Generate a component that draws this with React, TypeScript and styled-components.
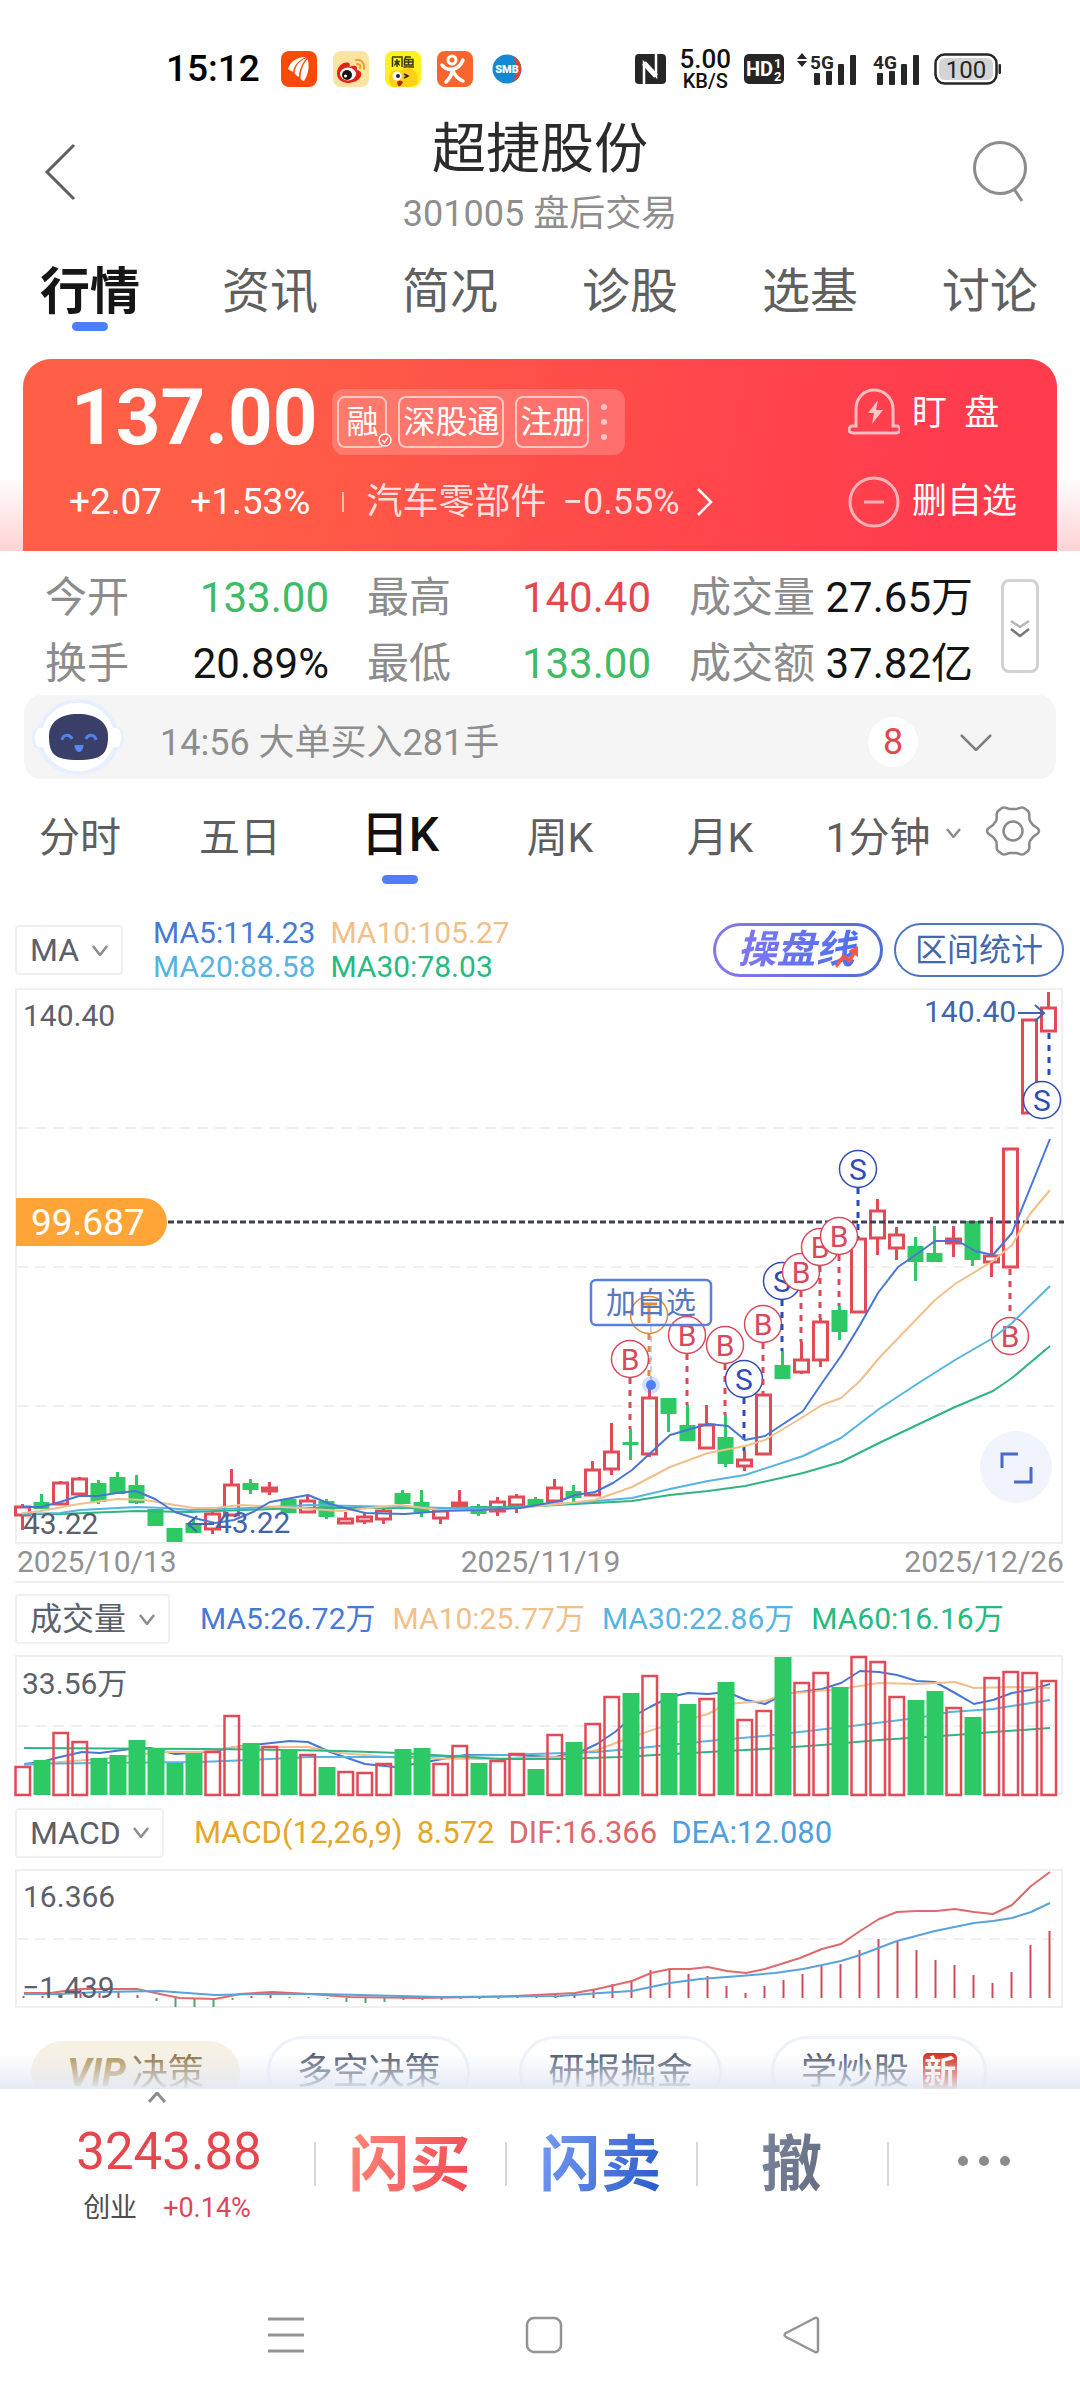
import React from "react";
import styled, { createGlobalStyle, css } from "styled-components";

const FONT = 'Roboto, "Noto Sans CJK SC", sans-serif';
const RED = "#e5474f";
const GREEN = "#3dbb65";
const UP = "#e34a57";
const DOWN = "#2cc964";
const BLUE = "#4d7ff8";
const MA_BLUE = "#4876d6";
const MA_ORANGE = "#f1c08a";
const MA_SKY = "#55b4e2";
const MA_GREEN = "#2fb582";
const INK = "#5b606b";
const FRAME = "#eff0f2";

const GlobalStyle = createGlobalStyle`
  * { box-sizing: border-box; }
  body { margin: 0; background: #fff; font-family: ${FONT}; color: #1a1a1a; }
  button, select { font: inherit; color: inherit; background: none; border: 0; padding: 0; margin: 0; }
  select { appearance: none; outline: none; }
  a { color: inherit; text-decoration: none; }
  h1, p, dl, dt, dd { margin: 0; font-weight: 400; }
`;

const Page = styled.main`
  display: flex;
  flex-direction: column;
  width: 100%;
`;

/* ---------- status bar ---------- */

const StatusBar = styled.div`
  display: flex;
  align-items: center;
  justify-content: space-between;
  height: 108px;
  padding: 30px 78px 0 166px;
`;

const StatusGroup = styled.div<{ $gap: number }>`
  display: flex;
  align-items: center;
  gap: ${(p) => p.$gap}px;
`;

const Clock = styled.span`
  margin-right: 5px;
  font-size: 37px;
  line-height: 40px;
  color: #000;
  font-weight: 500;
`;

const Speed = styled.span`
  display: flex;
  flex-direction: column;
  align-items: center;
  font-size: 20px;
  line-height: 20px;
  font-weight: 500;
  color: #111;
`;

const SpeedValue = styled.span`
  font-size: 26px;
  line-height: 24px;
`;

/* ---------- header ---------- */

const Header = styled.header`
  display: grid;
  grid-template-columns: 64px 1fr 64px;
  align-items: center;
  height: 135px;
  padding: 0 48px 0 28px;
`;

const IconButton = styled.button`
  display: flex;
  align-items: center;
  justify-content: center;
`;

const HeaderButton = styled(IconButton)`
  padding-bottom: 7px;
`;

const TitleBlock = styled.div`
  display: flex;
  flex-direction: column;
  align-items: center;
  padding: 7px 0 0 20px;
`;

const Title = styled.h1`
  font-size: 54px;
  line-height: 70px;
  color: #2b2b2b;
`;

const Subtitle = styled.p`
  font-size: 36px;
  line-height: 58px;
  color: #8e8e8e;
`;

const MainTabs = styled.nav`
  display: grid;
  grid-template-columns: repeat(6, 1fr);
  height: 116px;
  padding-top: 19px;
`;

const MainTab = styled.a<{ $active?: boolean }>`
  display: flex;
  flex-direction: column;
  align-items: center;
  font-size: 48px;
  line-height: 60px;
  color: #606060;
  ${(p) =>
    p.$active &&
    css`
      font-size: 50px;
      font-weight: 700;
      color: #161616;
      &::after {
        content: "";
        width: 36px;
        height: 9px;
        border-radius: 5px;
        background: ${BLUE};
      }
    `}
`;

/* ---------- quote card ---------- */

const CardBand = styled.section`
  padding: 0 23px;
  background: linear-gradient(to top, #ffd3d3 0, #fff 76px);
`;

const Card = styled.div`
  display: grid;
  grid-template-columns: 1fr 175px;
  column-gap: 20px;
  height: 192px;
  padding: 15px 34px 0 46px;
  border-radius: 28px 28px 0 0;
  background: linear-gradient(100deg, #ff5f46 20%, #ff4a4a 58%, #ff3b4e 90%);
  color: #fff;
`;

const CardMain = styled.div`
  display: flex;
  flex-direction: column;
`;

const PriceRow = styled.div`
  display: flex;
  align-items: center;
  gap: 15px;
  height: 88px;
  padding-left: 2px;
`;

const Price = styled.strong`
  font-size: 78px;
  line-height: 88px;
  font-weight: 700;
`;

const TagBox = styled.div`
  display: flex;
  align-items: center;
  gap: 11px;
  height: 66px;
  margin-top: 8px;
  padding: 0 17px 0 5px;
  border-radius: 12px;
  background: rgba(255, 255, 255, 0.2);
`;

const Tag = styled.span`
  position: relative;
  padding: 0 3px;
  border: 2px solid rgba(255, 255, 255, 0.6);
  border-radius: 8px;
  font-size: 32px;
  line-height: 48px;
  &:first-child {
    padding: 0 7px;
  }
`;

const TagCheck = styled.svg`
  position: absolute;
  right: -7px;
  bottom: -1px;
`;

const ChangeRow = styled.div`
  display: flex;
  align-items: center;
  height: 80px;
  font-size: 37px;
  line-height: 48px;
  gap: 28px;
`;

const SectorLink = styled.a`
  display: flex;
  align-items: center;
  gap: 16px;
  padding-left: 24px;
  margin-left: 4px;
  font-size: 36px;
  color: rgba(255, 255, 255, 0.82);
  background: linear-gradient(rgba(255, 255, 255, 0.6), rgba(255, 255, 255, 0.6)) no-repeat 0 50% / 2px 20px;
`;

const CardActions = styled.div`
  display: flex;
  flex-direction: column;
  gap: 8px;
`;

const CardAction = styled.button`
  display: flex;
  align-items: center;
  gap: 12px;
  height: 80px;
  font-size: 35px;
  line-height: 48px;
  white-space: nowrap;
`;

/* ---------- key figures ---------- */

const Figures = styled.section`
  display: flex;
  align-items: flex-start;
  gap: 28px;
  height: 144px;
  padding: 14px 41px 0 45px;
`;

const FigureGrid = styled.dl`
  flex: 1;
  display: grid;
  grid-template-columns: repeat(3, 1fr);
  column-gap: 38px;
`;

const Figure = styled.div`
  display: flex;
  justify-content: space-between;
  font-size: 42px;
  line-height: 66px;
  height: 66px;
`;

const FigureName = styled.dt`
  color: #8c8c8c;
`;

const FigureValue = styled.dd<{ $color?: string }>`
  color: ${(p) => p.$color || "#141414"};
`;

const ExpandFigures = styled.button`
  display: flex;
  align-items: center;
  justify-content: center;
  width: 38px;
  height: 94px;
  margin-top: 14px;
  padding-top: 6px;
  border: 3px solid #d2d2d2;
  border-radius: 8px;
`;

/* ---------- message ---------- */

const MessageBar = styled.button`
  display: flex;
  align-items: center;
  height: 84px;
  margin: 0 24px;
  padding: 0 64px 0 8px;
  border-radius: 18px;
  background: #f5f5f5;
  text-align: left;
  font-size: 36px;
  line-height: 48px;
  color: #8e8e8e;
`;

const MessageText = styled.span`
  flex: 1;
  padding: 12px 0 0 36px;
`;

const Count = styled.span`
  display: flex;
  align-items: center;
  justify-content: center;
  width: 50px;
  height: 50px;
  margin: 10px 42px 0 0;
  border-radius: 50%;
  background: #fff;
  color: ${RED};
`;

const MessageChevron = styled.span`
  display: flex;
  margin-top: 10px;
`;

/* ---------- period tabs ---------- */

const Periods = styled.nav`
  display: grid;
  grid-template-columns: repeat(5, 160fr) 180fr 100fr;
  height: 133px;
  padding-top: 22px;
`;

const Period = styled.a<{ $active?: boolean }>`
  display: flex;
  flex-direction: column;
  align-items: center;
  height: 83px;
  padding-top: 9px;
  font-size: 41px;
  line-height: 56px;
  color: #5e5e5e;
  ${(p) =>
    p.$active &&
    css`
      padding-top: 6px;
      justify-content: space-between;
      font-size: 48px;
      font-weight: 500;
      color: #111;
      &::after {
        content: "";
        width: 36px;
        height: 9px;
        border-radius: 5px;
        background: ${BLUE};
      }
    `}
`;

const MinuteSelect = styled.label`
  display: flex;
  align-items: center;
  justify-content: center;
  gap: 14px;
  height: 56px;
  margin-top: 9px;
  padding-left: 6px;
  font-size: 41px;
  line-height: 56px;
  color: #5e5e5e;
  svg {
    margin-bottom: 10px;
  }
`;

const GearButton = styled(IconButton)`
  height: 60px;
  padding-right: 34px;
`;

/* ---------- indicators ---------- */

const Panel = styled.section`
  padding: 0 16px 0 15px;
`;

const IndicatorBar = styled.div<{ $height: number }>`
  display: flex;
  align-items: center;
  height: ${(p) => p.$height}px;
  gap: 30px;
`;

const SelectBox = styled.label`
  display: flex;
  align-items: center;
  gap: 12px;
  height: 50px;
  padding: 0 13px;
  border: 2px solid ${FRAME};
  border-radius: 4px;
  font-size: 32px;
  line-height: 46px;
  color: ${INK};
`;

const Legend = styled.div<{ $wide?: boolean }>`
  display: flex;
  gap: ${(p) => (p.$wide ? 14 : 17)}px;
  font-size: ${(p) => (p.$wide ? 31 : 30)}px;
  line-height: 34px;
  white-space: nowrap;
`;

const LegendGrid = styled(Legend)`
  display: grid;
  grid-template-columns: auto auto;
  gap: 0 15px;
  margin-right: auto;
`;

const LegendItem = styled.span<{ $color: string }>`
  color: ${(p) => p.$color};
`;

const PillGroup = styled.div`
  display: flex;
  gap: 11px;
`;

const Pill = styled.button<{ $brand?: boolean }>`
  display: flex;
  align-items: center;
  justify-content: center;
  width: 170px;
  height: 54px;
  border: 2px solid #4c74c0;
  border-radius: 27px;
  font-size: 32px;
  line-height: 50px;
  color: #4468ae;
  ${(p) =>
    p.$brand &&
    css`
      border: 3px solid transparent;
      background: linear-gradient(#fff, #fff) padding-box,
        linear-gradient(100deg, #8b78ea, #4a6fd6) border-box;
      font-size: 39px;
      font-weight: 700;
      font-style: italic;
    `}
`;

const BrandText = styled.span`
  padding-right: 4px;
  background: linear-gradient(100deg, #8377f2, #4a6ff0);
  background-clip: text;
  -webkit-background-clip: text;
  color: transparent;
`;

const BrandArrow = styled.svg`
  margin: 14px 0 0 -26px;
`;

const ChartSvg = styled.svg`
  display: block;
  width: 100%;
  height: auto;
  overflow: visible;
  font-family: ${FONT};
  font-size: 30px;
`;

const DateAxis = styled.div`
  display: flex;
  justify-content: space-between;
  height: 39px;
  padding-left: 2px;
  border-bottom: 2px solid ${FRAME};
  font-size: 30px;
  line-height: 36px;
  color: #929292;
`;

/* ---------- chips ---------- */

const Chips = styled.section`
  position: relative;
  display: flex;
  gap: 49px;
  height: 81px;
  padding: 28px 93px 0 31px;
  overflow: hidden;
  &::after {
    content: "";
    position: absolute;
    inset: auto 0 0 0;
    height: 36px;
    background: linear-gradient(rgba(228, 233, 243, 0), rgba(228, 233, 243, 0.95));
  }
`;

const Chip = styled.button<{ $vip?: boolean; $size?: number }>`
  display: flex;
  flex: 1 1 ${(p) => p.$size || 203}px;
  align-items: center;
  justify-content: center;
  gap: 14px;
  height: 72px;
  border: 3px solid #eef2f9;
  border-radius: 36px;
  font-size: 36px;
  line-height: 48px;
  white-space: nowrap;
  color: #4f596e;
  ${(p) =>
    p.$vip &&
    css`
      gap: 6px;
      margin: 5px -22px 0 0;
      height: 64px;
      border: 0;
      background: #f7f1e4;
      color: #8d7443;
    `}
`;

const Vip = styled.em`
  font-size: 38px;
  font-weight: 700;
  color: #b39457;
`;

const NewBadge = styled.span`
  padding: 0 1px;
  border-radius: 5px;
  background: #d5301d;
  color: #fff;
  font-size: 32px;
  line-height: 38px;
  font-weight: 700;
`;

/* ---------- bottom bar ---------- */

const TradeBar = styled.footer`
  display: grid;
  grid-template-columns: 314fr 191fr 191fr 191fr 193fr;
  height: 142px;
`;

const IndexButton = styled.button`
  display: flex;
  flex-direction: column;
  align-items: center;
  height: 142px;
`;

const IndexCaret = styled.span`
  display: flex;
  margin-top: 3px;
`;

const IndexValue = styled.span`
  margin: 23px 0 10px 24px;
  font-size: 51px;
  line-height: 52px;
  color: ${RED};
`;

const IndexDetail = styled.span`
  display: flex;
  gap: 26px;
  margin-left: 20px;
  font-size: 27px;
  line-height: 40px;
  color: #4d4d4d;
`;

const Rise = styled.span`
  color: #d9485a;
`;

const TradeButton = styled.button`
  display: flex;
  align-items: center;
  justify-content: center;
  height: 90px;
  margin-top: 30px;
  font-size: 61px;
  line-height: 90px;
  font-weight: 700;
  background: linear-gradient(#d6d6d6, #d6d6d6) no-repeat 0 50% / 2px 44px;
`;

const TradeText = styled.span<{ $from: string; $to: string }>`
  padding-top: 2px;
  background: linear-gradient(110deg, ${(p) => p.$from}, ${(p) => p.$to});
  background-clip: text;
  -webkit-background-clip: text;
  color: transparent;
`;

const SystemNav = styled.nav`
  display: flex;
  align-items: center;
  justify-content: center;
  gap: 218px;
  height: 170px;
  padding: 38px 0 0 8px;
`;

/* ---------- drawings ---------- */

const Chevron = ({ w = 16, h = 9, up = false, sw = 2.5, color = "#8d8d8d" }) => (
  <svg width={w} height={h + 2} viewBox={`0 0 ${w} ${h + 2}`} fill="none" stroke={color} strokeWidth={sw} aria-hidden>
    <path d={up ? `M1 ${h + 1}L${w / 2} 1L${w - 1} ${h + 1}` : `M1 1L${w / 2} ${h + 1}L${w - 1} 1`} />
  </svg>
);

const AppIcons = () => (
  <>
    <svg width="36" height="36" viewBox="0 0 36 36" aria-hidden>
      <rect width="36" height="36" rx="8" fill="#fb4a08" />
      <path d="M7 18C9 11 15 6 25 6C18 9 13 14 12 21C10 20 9 19 7 18Z" fill="#fff" />
      <path d="M13.500 22C14 15 18 10 25.500 7C21 13 18 19 18 26C16 25 15 24 13.500 22Z" fill="#fff" />
      <path d="M19.500 27C19.500 20 22 13 26.500 8C29 15 27 24 23 30C21.500 30 20 29 19.500 27Z" fill="#fff" />
    </svg>
    <svg width="36" height="36" viewBox="0 0 36 36" aria-hidden>
      <rect width="36" height="36" rx="8" fill="#fbe3a0" />
      <path d="M4 22C4 15 11 10 16 12C17 13 17 14 16.500 16C20 14 25 14 24 19C28 20 29 22 28 25C26 30 20 32 14 32C8 31 4 28 4 22Z" fill="#e2231a" />
      <ellipse cx="15" cy="23" rx="8" ry="6.500" fill="#fff" />
      <circle cx="14" cy="24" r="5" fill="#161616" />
      <circle cx="12.500" cy="25" r="1.500" fill="#fff" />
      <path d="M23 9C28 8 32 12 31 18M24 13C27 13 28 15 27 17" fill="none" stroke="#f2a02c" strokeWidth="2" strokeLinecap="round" />
    </svg>
    <svg width="36" height="36" viewBox="0 0 36 36" aria-hidden>
      <rect width="36" height="36" rx="8" fill="#fdf21d" />
      <path d="M7.500 6V16M7 6H17V16M12 8V16M9.500 10.500H15M11.500 11L9.500 14.500M12.500 11L14.500 14.500M21 5L20 8M21 6H26M19.500 8.500H28V14H19.500ZM23.500 8V14M19.500 11H28M18.500 16H29" fill="none" stroke="#3b3710" strokeWidth="1.500" />
      <path d="M4 30C3 22 8 17 16 20C20 15 26 16 29 20C33 22 33 28 32 33C26 37 10 38 6 34Z" fill="#ffcf1a" />
      <circle cx="12" cy="25" r="4.500" fill="#fff" />
      <circle cx="13" cy="25" r="2" fill="#222" />
      <path d="M19 23L23 25L19 27" fill="none" stroke="#222" strokeWidth="1.500" />
      <path d="M12 31Q15 28 18 31Q16 36 13 35Z" fill="#b32618" />
    </svg>
    <svg width="36" height="36" viewBox="0 0 36 36" aria-hidden>
      <rect width="36" height="36" rx="8" fill="#f9662d" />
      <circle cx="15" cy="9" r="4" fill="none" stroke="#fff" strokeWidth="3" />
      <path d="M5 14C8 18 12 19 16 18C21 17 24 14 26 9" fill="none" stroke="#fff" strokeWidth="3.500" strokeLinecap="round" />
      <path d="M9 31C12 28 15 24 15.500 19C18 25 21 28 26 30" fill="none" stroke="#fff" strokeWidth="3.500" strokeLinecap="round" />
    </svg>
    <svg width="36" height="36" viewBox="0 0 36 36" aria-hidden>
      <circle cx="18" cy="18" r="14.500" fill="#1687d3" />
      <path d="M24 5A14.500 14.500 0 0 1 24 31C28 23 28 13 24 5Z" fill="#e5412d" />
      <text x="18" y="22" fontSize="11" fontWeight="900" fontFamily="Roboto, sans-serif" fill="#fff" textAnchor="middle">SMB</text>
    </svg>
  </>
);

const Nfc = () => (
  <svg width="31" height="32" viewBox="0 0 31 32" aria-hidden>
    <rect x="0" y="1" width="31" height="30" rx="4" fill="#262626" />
    <path d="M9 32V10L21 23V0" fill="none" stroke="#fff" strokeWidth="2.500" />
    <path d="M9 10L21 23" stroke="#fff" strokeWidth="5" />
  </svg>
);

const Hd = () => (
  <svg width="40" height="30" viewBox="0 0 40 30" fontFamily="Roboto, sans-serif" fontWeight="700" fill="#fff" aria-hidden>
    <rect width="40" height="30" rx="5" fill="#262626" />
    <text x="2" y="22" fontSize="20">HD</text>
    <text x="30" y="14" fontSize="13">1</text>
    <text x="30" y="27" fontSize="13">2</text>
  </svg>
);

const Signal = ({ name, arrows = false }: { name: string; arrows?: boolean }) => (
  <svg width={arrows ? 61 : 50} height="34" viewBox={arrows ? "0 0 61 34" : "11 0 50 34"} fill="#262626" overflow="visible" aria-hidden>
    {arrows && <path d="M0 7L5 1L10 7ZM0 9H10L5 15Z" />}
    <text x="13" y="17" fontSize="19" fontWeight="700" fontFamily="Roboto, sans-serif">{name}</text>
    <rect x="17" y="21" width="6" height="12" rx="1" />
    <rect x="29" y="19" width="6" height="14" rx="1" />
    <rect x="41" y="12" width="6" height="21" rx="1" />
    <rect x="53" y="3" width="6" height="30" rx="1" />
  </svg>
);

const Battery = () => (
  <svg width="68" height="32" viewBox="0 0 68 32" aria-hidden>
    <rect x="1.500" y="1.500" width="61" height="29" rx="9" fill="#fff" stroke="#262626" strokeWidth="2.500" />
    <rect x="5" y="5" width="54" height="22" rx="6" fill="#d4d4d4" />
    <rect x="64.500" y="11" width="2.500" height="10" rx="1" fill="#262626" />
    <text x="32" y="24.500" fontSize="24" fontFamily="Roboto, sans-serif" fill="#262626" textAnchor="middle">100</text>
  </svg>
);

const Robot = () => (
  <svg width="92" height="78" viewBox="0 0 92 78" aria-hidden>
    <path d="M46 1C68 1 82 16 85 29C91 30 92 34 92 40S91 50 86 51C80 67 65 77 46 77S12 67 6 51C1 50 0 46 0 40S1 30 7 29C10 16 24 1 46 1Z" fill="#e9f0fd" />
    <path d="M46 5C65 5 77 17 81 30H84Q89 30 89 40T84 49H81C76 63 63 73 46 73S16 63 11 49H8Q3 49 3 40T8 30H11C15 17 27 5 46 5Z" fill="#fff" />
    <path d="M46 16C64 16 76 24 76 38C76 56 70 62 46 62S17 56 17 38C17 24 28 16 46 16Z" fill="#3a3f69" />
    <path d="M30 42C31 36 38 36 40 41M54 41C56 36 63 36 64 42" fill="none" stroke="#4c83ee" strokeWidth="3" />
    <path d="M42.500 47H51.500Q51 54 47 54T42.500 47Z" fill="#5589f5" />
  </svg>
);

/* ---------- chart data ---------- */

type Candle = [up: 0 | 1, high: number, top: number, bottom: number, low: number, volumeTop: number];

const CANDLES: Candle[] = [
  [1, 1504, 1507, 1515, 1530, 1766], [0, 1494, 1502, 1509, 1509, 1760], [1, 1481, 1483, 1504, 1504, 1732],
  [1, 1477, 1479, 1494, 1496, 1741], [0, 1480, 1483, 1502, 1504, 1758], [0, 1472, 1477, 1494, 1494, 1755],
  [0, 1475, 1485, 1503, 1504, 1740], [0, 1509, 1509, 1526, 1526, 1748], [0, 1528, 1528, 1542, 1542, 1763],
  [0, 1519, 1523, 1533, 1533, 1753], [1, 1512, 1514, 1529, 1534, 1751], [1, 1469, 1485, 1515, 1515, 1715],
  [0, 1479, 1483, 1490, 1494, 1743], [1, 1482, 1488, 1491, 1495, 1746], [0, 1499, 1499, 1513, 1513, 1749],
  [1, 1495, 1501, 1512, 1513, 1754], [0, 1499, 1501, 1517, 1519, 1767], [1, 1512, 1519, 1523, 1524, 1771],
  [1, 1512, 1517, 1521, 1524, 1772], [1, 1509, 1511, 1519, 1524, 1763], [0, 1490, 1493, 1504, 1504, 1749],
  [0, 1490, 1502, 1512, 1517, 1748], [1, 1509, 1511, 1518, 1524, 1763], [1, 1490, 1503, 1506, 1506, 1745],
  [0, 1504, 1506, 1514, 1516, 1763], [1, 1497, 1502, 1511, 1516, 1760], [1, 1494, 1497, 1505, 1513, 1753],
  [0, 1497, 1499, 1505, 1505, 1769], [1, 1479, 1488, 1501, 1501, 1734], [0, 1485, 1491, 1498, 1502, 1742],
  [1, 1461, 1470, 1495, 1495, 1723], [1, 1423, 1452, 1469, 1475, 1696], [0, 1429, 1442, 1445, 1460, 1693],
  [1, 1388, 1398, 1454, 1457, 1675], [0, 1398, 1398, 1414, 1432, 1693], [0, 1405, 1425, 1441, 1441, 1704],
  [1, 1405, 1425, 1448, 1448, 1698], [0, 1415, 1437, 1464, 1467, 1682], [1, 1451, 1460, 1466, 1471, 1719],
  [1, 1394, 1395, 1454, 1454, 1710], [0, 1351, 1365, 1379, 1379, 1657], [1, 1342, 1360, 1372, 1374, 1682],
  [1, 1318, 1322, 1360, 1367, 1672], [0, 1306, 1310, 1332, 1340, 1687], [1, 1238, 1239, 1312, 1312, 1656],
  [1, 1199, 1211, 1238, 1255, 1661], [1, 1227, 1235, 1248, 1260, 1696], [0, 1237, 1246, 1262, 1281, 1700],
  [0, 1226, 1253, 1262, 1262, 1691], [1, 1226, 1239, 1243, 1257, 1707], [0, 1221, 1221, 1260, 1266, 1717],
  [1, 1217, 1256, 1262, 1277, 1677], [1, 1148, 1149, 1267, 1267, 1671], [1, 1019, 1020, 1113, 1113, 1672],
  [1, 992, 1008, 1031, 1031, 1680],
];

const PRICE_LINES = [
  [MA_GREEN, "22,1514 60,1514 137,1511 190,1512 300,1508 450,1508 540,1506 575,1504 632,1501 670,1495 708,1491 745,1486 803,1473 841,1462 879,1443 917,1425 955,1407 993,1391 1012,1378 1050,1346"],
  [MA_SKY, "22,1514 60,1513 80,1510 137,1507 165,1508 190,1510 250,1508 310,1505 400,1507 500,1509 560,1504 632,1498 670,1489 708,1481 745,1475 803,1456 841,1438 879,1409 917,1384 955,1360 993,1338 1012,1323 1050,1286"],
  [MA_ORANGE, "22,1513 41,1511 79,1504 117,1499 145,1500 175,1505 194,1508 215,1508 240,1505 300,1508 340,1511 400,1505 440,1510 480,1510 520,1508 560,1504 595,1500 632,1487 670,1467 708,1453 745,1446 765,1440 803,1417 822,1405 841,1398 860,1381 879,1358 935,1300 955,1284 993,1261 1012,1245 1030,1214 1050,1190"],
  [MA_BLUE, "22,1507 41,1507 60,1502 79,1496 98,1496 117,1493 136,1491 155,1499 175,1512 194,1518 215,1523 234,1520 253,1512 270,1502 308,1495 330,1504 365,1513 405,1514 442,1511 480,1510 520,1508 560,1501 575,1495 595,1492 613,1483 632,1470 670,1435 708,1424 728,1426 745,1440 765,1436 803,1411 822,1383 841,1356 860,1325 878,1293 898,1267 917,1254 935,1241 958,1241 975,1251 993,1255 1012,1233 1050,1139"],
];

const VOLUME_LINES = [
  [MA_BLUE, "24,1764 41,1762 60,1757 82,1752 100,1753 130,1749 150,1748 175,1754 194,1753 215,1751 235,1747 262,1744 290,1741 308,1742 330,1752 365,1764 395,1767 420,1763 465,1755 510,1755 555,1757 580,1752 597,1744 615,1732 632,1717 650,1707 670,1697 688,1693 708,1694 727,1692 746,1700 765,1704 784,1694 800,1692 822,1689 841,1683 860,1671 879,1672 897,1675 917,1681 935,1682 955,1693 974,1704 993,1700 1012,1693 1030,1690 1050,1684"],
  [MA_ORANGE, "24,1766 60,1762 100,1759 137,1755 160,1752 200,1752 235,1747 308,1747 340,1753 400,1758 480,1759 560,1757 597,1750 632,1737 670,1724 708,1714 727,1704 765,1701 784,1694 841,1689 879,1683 917,1684 955,1682 974,1688 1012,1687 1050,1688"],
  [MA_SKY, "24,1764 100,1763 200,1762 250,1760 310,1757 400,1757 500,1755 597,1752 650,1747 708,1741 765,1736 860,1725 917,1718 950,1712 993,1709 1050,1700"],
  [MA_GREEN, "24,1748 200,1749 290,1750 340,1751 400,1753 500,1759 560,1759 620,1757 708,1752 765,1749 822,1745 879,1740 955,1735 993,1732 1050,1728"],
];

const MACD_BARS = [
  1996, 1996, 1993, 1990, 1991, 1992, 1995, 2001, 2007, 2007, 2007, 2000, 1996, 1993, 1997, 1997, 1999, 2002, 2003,
  2002, 2000, 2000, 2000, 1999, 1999, 1999, 1996, 1996, 1993, 1993, 1990, 1984, 1980, 1970, 1968, 1974, 1976, 1986,
  1993, 1986, 1980, 1974, 1966, 1964, 1950, 1939, 1941, 1950, 1960, 1965, 1975, 1983, 1972, 1945, 1931,
];

const MACD_LINES = [
  ["#df6a6c", "24,1993 50,1993 80,1989 137,1989 160,1994 180,1998 215,1999 240,1994 272,1992 310,1994 350,1997 420,1998 480,1997 515,1996 575,1993 597,1989 632,1981 651,1973 670,1969 690,1969 708,1967 727,1971 746,1973 765,1969 800,1958 822,1949 841,1944 860,1931 879,1919 897,1912 917,1911 936,1911 955,1909 974,1912 993,1914 1012,1905 1031,1886 1050,1872"],
  ["#5aa2dc", "24,1994 60,1994 100,1992 160,1991 215,1995 260,1994 320,1994 440,1997 560,1996 600,1993 632,1991 670,1983 700,1979 740,1976 775,1973 803,1969 841,1961 860,1955 897,1941 935,1931 974,1923 993,1921 1012,1918 1031,1912 1050,1903"],
];

const MARKS: { kind: "B" | "S" | "T"; x: number; y: number; stem: [number, number, number] }[] = [
  { kind: "T", x: 649, y: 1315, stem: [649, 1334, 1380] },
  { kind: "B", x: 630, y: 1359, stem: [630, 1378, 1429] },
  { kind: "B", x: 687, y: 1335, stem: [687, 1354, 1405] },
  { kind: "B", x: 725, y: 1345, stem: [725, 1364, 1415] },
  { kind: "S", x: 744, y: 1379, stem: [744, 1398, 1451] },
  { kind: "B", x: 763, y: 1324, stem: [763, 1343, 1394] },
  { kind: "S", x: 782, y: 1281, stem: [782, 1300, 1351] },
  { kind: "B", x: 801, y: 1272, stem: [801, 1291, 1342] },
  { kind: "B", x: 820, y: 1247, stem: [820, 1266, 1318] },
  { kind: "S", x: 858, y: 1169, stem: [858, 1188, 1238] },
  { kind: "B", x: 839, y: 1236, stem: [839, 1255, 1306] },
  { kind: "B", x: 1010, y: 1336, stem: [1010, 1269, 1317] },
  { kind: "S", x: 1042, y: 1100, stem: [1049, 1033, 1081] },
];

const MARK_COLOR = { B: "#d84a5a", S: "#2f4bb8", T: "#e08a3a" };

const xAt = (i: number) => 22.5 + i * 19;

const Lines = ({ data, width = 2 }: { data: string[][]; width?: number }) => (
  <>
    {data.map(([color, points]) => (
      <polyline key={color} points={points} fill="none" stroke={color} strokeWidth={width} strokeLinejoin="round" />
    ))}
  </>
);

const Frame = ({ top, bottom, grid }: { top: number; bottom: number; grid: number[] }) => (
  <g stroke={FRAME} strokeWidth="2" fill="none">
    <rect x="16" y={top} width="1046" height={bottom - top} />
    {grid.map((y) => (
      <path key={y} d={`M17 ${y}H1062`} strokeDasharray="11 7" />
    ))}
  </g>
);

const PriceChart = () => (
  <ChartSvg viewBox="15 988 1049 556" role="img" aria-label="日K">
    <Frame top={989} bottom={1543} grid={[1128, 1267, 1406]} />
    {CANDLES.map(([up, high, top, bottom, low], i) => {
      const x = xAt(i);
      const color = up ? UP : DOWN;
      return (
        <g key={i} stroke={color} strokeWidth="3" fill={up ? "none" : color}>
          <path d={`M${x} ${high}V${top}M${x} ${bottom}V${low}`} />
          {up ? (
            <rect x={x - 7} y={top} width="14" height={bottom - top} />
          ) : (
            <rect x={x - 8} y={top} width="16" height={bottom - top} stroke="none" />
          )}
        </g>
      );
    })}
    <path d="M150 1222H1064" stroke="#3c4154" strokeWidth="3" strokeDasharray="6 3" />
    {MARKS.map(({ kind, x, y, stem: [sx, from, to] }) => (
      <g key={`${kind}${x}`} stroke={MARK_COLOR[kind]}>
        <path d={`M${sx} ${from}V${to}`} strokeWidth="3" strokeDasharray="6 6" />
        <circle cx={x} cy={y} r="18.500" fill="#fff" strokeWidth="1.500" />
        {kind === "T" ? (
          <path d={`M${x - 8} ${y - 11}H${x + 8}M${x} ${y - 11}V${y + 8}`} strokeWidth="3" />
        ) : (
          <text x={x} y={y + 11} textAnchor="middle" fill={MARK_COLOR[kind]} stroke="none">{kind}</text>
        )}
      </g>
    ))}
    <Lines data={PRICE_LINES} />
    <rect x="591" y="1280" width="120" height="45" rx="5" fill="none" stroke="#5a80dc" strokeWidth="2.500" />
    <text x="651" y="1313" textAnchor="middle" fill="#5577c4">加自选</text>
    <path d="M651 1326V1380" stroke="#9b9fd0" strokeDasharray="6 4" />
    <circle cx="651" cy="1385" r="9" fill={BLUE} fillOpacity="0.25" />
    <circle cx="651" cy="1385" r="5" fill={BLUE} />
    <g fill={INK}>
      <text x="23" y="1026">140.40</text>
      <text x="23" y="1534">43.22</text>
    </g>
    <g fill="#3f66ac">
      <text x="924" y="1022">140.40</text>
      <text x="215" y="1533">43.22</text>
      <path d="M1018 1013H1044M1035 1005L1044 1013L1035 1021M214 1524H188M197 1516L188 1524L197 1532" fill="none" stroke="#3f66ac" strokeWidth="2" />
    </g>
    <path d="M16 1198H143A24 24 0 0 1 143 1246H16Z" fill="#ffa538" />
    <text x="31" y="1235" fontSize="37" fill="#fff">99.687</text>
    <circle cx="1016" cy="1467" r="36" fill="#f1f4fd" />
    <path d="M1002 1468V1454H1018M1014 1482H1031V1467" fill="none" stroke="#4a69c8" strokeWidth="3" />
  </ChartSvg>
);

const VolumeChart = () => (
  <ChartSvg viewBox="15 1655 1049 141" role="img" aria-label="成交量">
    <Frame top={1656} bottom={1794} grid={[1726]} />
    <Lines data={VOLUME_LINES} />
    {CANDLES.map(([up, , , , , top], i) =>
      up ? (
        <rect key={i} x={xAt(i) - 7} y={top + 1} width="14.500" height={1794 - top} fill="none" stroke={UP} strokeWidth="2.500" />
      ) : (
        <rect key={i} x={xAt(i) - 8} y={top} width="17" height={1795 - top} fill={DOWN} />
      )
    )}
    <text x="22" y="1694" fill={INK}>33.56万</text>
  </ChartSvg>
);

const MacdChart = () => (
  <ChartSvg viewBox="15 1869 1049 139" role="img" aria-label="MACD">
    <Frame top={1870} bottom={2007} grid={[1939]} />
    {MACD_BARS.map((y, i) => (
      <path key={i} d={`M${xAt(i) + 1} 1998V${y}`} stroke={y < 1998 ? "#cf4a58" : "#49a968"} strokeWidth="2" />
    ))}
    <Lines data={MACD_LINES} />
    <g fill={INK}>
      <text x="23" y="1907">16.366</text>
      <text x="22" y="1998">−1.439</text>
    </g>
  </ChartSvg>
);

const IndicatorSelect = ({ name }: { name: string }) => (
  <SelectBox>
    <select aria-label={name}>
      <option>{name}</option>
    </select>
    <Chevron />
  </SelectBox>
);

const FIGURES: [string, string, string?][] = [
  ["今开", "133.00", GREEN],
  ["最高", "140.40", RED],
  ["成交量", "27.65万"],
  ["换手", "20.89%"],
  ["最低", "133.00", GREEN],
  ["成交额", "37.82亿"],
];

const TRADES = [
  ["闪买", "#ff8a78", "#f24450"],
  ["闪卖", "#7a9df8", "#2358c8"],
  ["撤", "#7b859c", "#636c80"],
];

export default function App() {
  return (
    <Page>
      <GlobalStyle />
      <StatusBar>
        <StatusGroup $gap={16}>
          <Clock>15:12</Clock>
          <AppIcons />
        </StatusGroup>
        <StatusGroup $gap={13}>
          <Nfc />
          <Speed>
            <SpeedValue>5.00</SpeedValue>
            KB/S
          </Speed>
          <Hd />
          <Signal name="5G" arrows />
          <Signal name="4G" />
          <Battery />
        </StatusGroup>
      </StatusBar>

      <Header>
        <HeaderButton aria-label="返回">
          <svg width="44" height="60" viewBox="0 0 44 60" fill="none" stroke="#5f5f5f" strokeWidth="3" aria-hidden>
            <path d="M36 3L9 30L36 57" />
          </svg>
        </HeaderButton>
        <TitleBlock>
          <Title>超捷股份</Title>
          <Subtitle>301005 盘后交易</Subtitle>
        </TitleBlock>
        <HeaderButton aria-label="搜索">
          <svg width="56" height="64" viewBox="0 0 56 64" fill="none" stroke="#8c8c8c" strokeWidth="3" aria-hidden>
            <circle cx="28" cy="28" r="25.500" />
            <path d="M42 49L50 61" />
          </svg>
        </HeaderButton>
      </Header>

      <MainTabs>
        {["行情", "资讯", "简况", "诊股", "选基", "讨论"].map((t, i) => (
          <MainTab key={t} href="#" $active={i === 0}>{t}</MainTab>
        ))}
      </MainTabs>

      <CardBand>
        <Card>
          <CardMain>
            <PriceRow>
              <Price>137.00</Price>
              <TagBox>
                <Tag>
                  融
                  <TagCheck width="14" height="14" viewBox="0 0 14 14" aria-hidden>
                    <circle cx="7" cy="7" r="6" fill="#ff6a5c" stroke="#fff" strokeWidth="1.500" />
                    <path d="M4 7L6.500 9.500L10 4.500" fill="none" stroke="#fff" strokeWidth="1.500" />
                  </TagCheck>
                </Tag>
                <Tag>深股通</Tag>
                <Tag>注册</Tag>
                <svg width="8" height="38" viewBox="0 0 8 38" fill="#fff" fillOpacity="0.6" aria-hidden>
                  <circle cx="4" cy="4" r="3" />
                  <circle cx="4" cy="19" r="3" />
                  <circle cx="4" cy="34" r="3" />
                </svg>
              </TagBox>
            </PriceRow>
            <ChangeRow>
              <span>+2.07</span>
              <span>+1.53%</span>
              <SectorLink href="#">
                <span>汽车零部件</span>
                <span>−0.55%</span>
                <svg width="17" height="30" viewBox="0 0 17 30" fill="none" stroke="#fff" strokeWidth="2.500" aria-hidden>
                  <path d="M2 2L15 15L2 28" />
                </svg>
              </SectorLink>
            </ChangeRow>
          </CardMain>
          <CardActions>
            <CardAction>
              <svg width="52" height="52" viewBox="0 0 52 52" fill="none" stroke="#fff" strokeOpacity="0.65" strokeWidth="3" aria-hidden>
                <path d="M8 38V21C8 10 16 2 26 2S45 10 45 21V38H48.500A3 3 0 0 1 48.500 45H4.500A3 3 0 0 1 4.500 38Z" />
                <path d="M30 12L20 25H26L24 36L35 22H28Z" fill="#fff" fillOpacity="0.7" stroke="none" />
              </svg>
              盯&nbsp;&nbsp;盘
            </CardAction>
            <CardAction>
              <svg width="52" height="52" viewBox="0 0 52 52" fill="none" stroke="#fff" strokeOpacity="0.6" strokeWidth="3" aria-hidden>
                <circle cx="26" cy="26" r="24" />
                <path d="M16 26H36" />
              </svg>
              删自选
            </CardAction>
          </CardActions>
        </Card>
      </CardBand>

      <Figures>
        <FigureGrid>
          {FIGURES.map(([name, value, color]) => (
            <Figure key={name}>
              <FigureName>{name}</FigureName>
              <FigureValue $color={color}>{value}</FigureValue>
            </Figure>
          ))}
        </FigureGrid>
        <ExpandFigures aria-label="展开">
          <svg width="20" height="20" viewBox="0 0 20 20" fill="none" strokeWidth="2.500" aria-hidden>
            <path d="M1 2L10 8L19 2" stroke="#b5b5b5" />
            <path d="M1 10L10 17L19 10" stroke="#777" />
          </svg>
        </ExpandFigures>
      </Figures>

      <MessageBar>
        <Robot />
        <MessageText>14:56 大单买入281手</MessageText>
        <Count>8</Count>
        <MessageChevron>
          <Chevron w={32} h={15} color="#7d7d7d" />
        </MessageChevron>
      </MessageBar>

      <Periods>
        {["分时", "五日", "日K", "周K", "月K"].map((t) => (
          <Period key={t} href="#" $active={t === "日K"}>{t}</Period>
        ))}
        <MinuteSelect>
          <select aria-label="分钟周期">
            <option>1分钟</option>
          </select>
          <Chevron w={15} h={8} />
        </MinuteSelect>
        <GearButton aria-label="设置">
          <svg width="56" height="56" viewBox="0 0 56 56" fill="none" stroke="#8a8a8a" strokeWidth="2.500" aria-hidden>
            <path d="M17 5C20 3 22 6 25 6H31C34 6 36 3 39 5L43 8C46 11 43 14 45 18L48 22C50 24 54 25 54 28S50 32 48 34L45 38C43 42 46 45 43 48L39 51C36 53 34 50 31 50H25C22 50 20 53 17 51L13 48C10 45 13 42 11 38L8 34C6 32 2 31 2 28S6 24 8 22L11 18C13 14 10 11 13 8Z" />
            <circle cx="28" cy="28" r="9.500" />
          </svg>
        </GearButton>
      </Periods>

      <Panel>
        <IndicatorBar $height={76}>
          <IndicatorSelect name="MA" />
          <LegendGrid>
            <LegendItem $color="#4679d8">MA5:114.23</LegendItem>
            <LegendItem $color={MA_ORANGE}>MA10:105.27</LegendItem>
            <LegendItem $color={MA_SKY}>MA20:88.58</LegendItem>
            <LegendItem $color="#26ba81">MA30:78.03</LegendItem>
          </LegendGrid>
          <PillGroup>
            <Pill $brand>
              <BrandText>操盘线</BrandText>
              <BrandArrow width="26" height="24" viewBox="0 0 26 24" aria-hidden>
                <path d="M2 20L10 9L16 13L19 8L15 6L25 1L25 12L22 10L17 18L11 14L4 23Z" fill="#f4584a" />
              </BrandArrow>
            </Pill>
            <Pill>区间统计</Pill>
          </PillGroup>
        </IndicatorBar>
        <PriceChart />
        <DateAxis>
          <span>2025/10/13</span>
          <span>2025/11/19</span>
          <span>2025/12/26</span>
        </DateAxis>

        <IndicatorBar $height={72}>
          <IndicatorSelect name="成交量" />
          <Legend>
            <LegendItem $color="#4679d8">MA5:26.72万</LegendItem>
            <LegendItem $color={MA_ORANGE}>MA10:25.77万</LegendItem>
            <LegendItem $color={MA_SKY}>MA30:22.86万</LegendItem>
            <LegendItem $color="#26ba81">MA60:16.16万</LegendItem>
          </Legend>
        </IndicatorBar>
        <VolumeChart />

        <IndicatorBar $height={73}>
          <IndicatorSelect name="MACD" />
          <Legend $wide>
            <LegendItem $color="#e5a72a">MACD(12,26,9)</LegendItem>
            <LegendItem $color="#e5a72a">8.572</LegendItem>
            <LegendItem $color="#dd686c">DIF:16.366</LegendItem>
            <LegendItem $color="#509fdc">DEA:12.080</LegendItem>
          </Legend>
        </IndicatorBar>
        <MacdChart />
      </Panel>

      <Chips>
        <Chip $vip $size={209}>
          <Vip>VIP</Vip>决策
        </Chip>
        <Chip>多空决策</Chip>
        <Chip>研报掘金</Chip>
        <Chip $size={216}>
          学炒股<NewBadge>新</NewBadge>
        </Chip>
      </Chips>

      <TradeBar>
        <IndexButton>
          <IndexCaret>
            <Chevron w={18} h={9} up sw={3} />
          </IndexCaret>
          <IndexValue>3243.88</IndexValue>
          <IndexDetail>
            创业 <Rise>+0.14%</Rise>
          </IndexDetail>
        </IndexButton>
        {TRADES.map(([name, from, to]) => (
          <TradeButton key={name}>
            <TradeText $from={from} $to={to}>{name}</TradeText>
          </TradeButton>
        ))}
        <TradeButton aria-label="更多">
          <svg width="54" height="18" viewBox="0 0 54 18" fill="#8b8b8b" aria-hidden>
            <circle cx="6" cy="6" r="5" />
            <circle cx="27" cy="6" r="5" />
            <circle cx="48" cy="6" r="5" />
          </svg>
        </TradeButton>
      </TradeBar>

      <SystemNav>
        <IconButton aria-label="最近任务">
          <svg width="40" height="40" viewBox="0 0 40 40" stroke="#949494" strokeWidth="3" aria-hidden>
            <path d="M2 4H38M2 20H38M2 36H38" />
          </svg>
        </IconButton>
        <IconButton aria-label="主页">
          <svg width="40" height="40" viewBox="0 0 40 40" fill="none" stroke="#949494" strokeWidth="2.500" aria-hidden>
            <rect x="3" y="3" width="34" height="34" rx="7" />
          </svg>
        </IconButton>
        <IconButton aria-label="后退">
          <svg width="40" height="40" viewBox="0 0 40 40" fill="none" stroke="#949494" strokeWidth="2.500" strokeLinejoin="round" aria-hidden>
            <path d="M4 18L33 3Q36 2 36 5V35Q36 38 33 37L4 22Q1 20 4 18Z" />
          </svg>
        </IconButton>
      </SystemNav>
    </Page>
  );
}
